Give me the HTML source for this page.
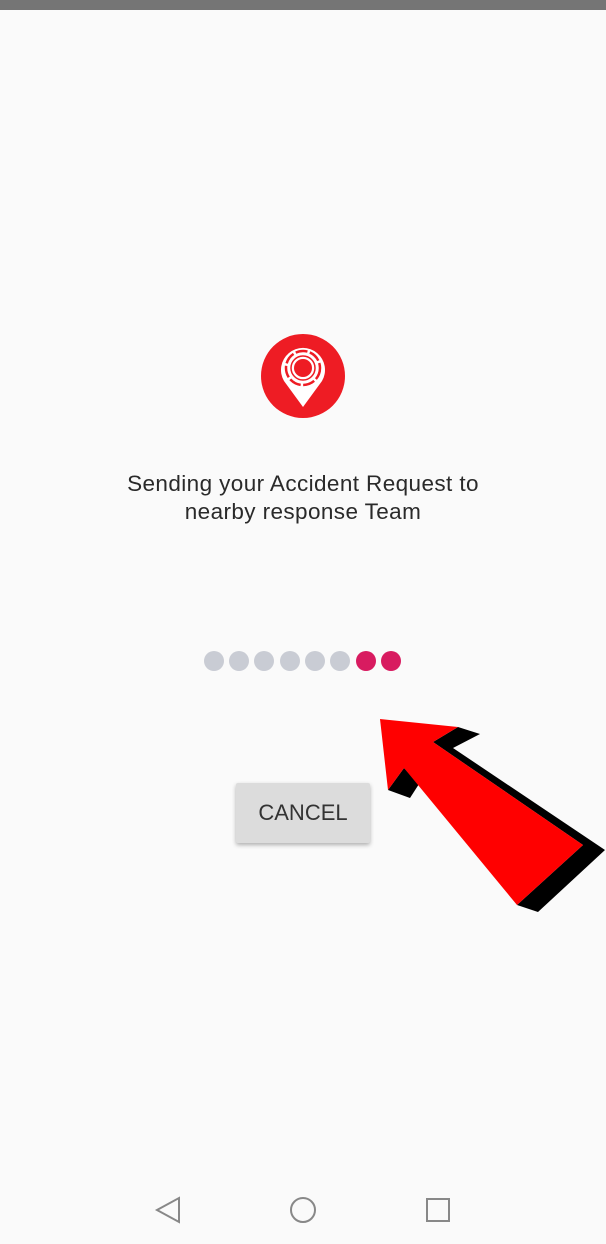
<!DOCTYPE html>
<html><head><style>
body{margin:0;width:606px;height:1244px;background:#fafafa;position:relative;overflow:hidden;font-family:"Liberation Sans",sans-serif}
.top{position:absolute;left:0;top:0;width:606px;height:10px;background:#757575}
.t{position:absolute;left:0;width:606px;text-align:center;font-size:22.5px;letter-spacing:0.4px;color:#2a2a2a;top:470px;line-height:28px}
.btn{position:absolute;left:236px;top:783px;width:134px;height:60px;background:#dcdcdc;box-shadow:0 2px 4px rgba(0,0,0,.3);border-radius:2px;text-align:center;line-height:60px;font-size:22px;color:#333}
.d{position:absolute;top:651px;width:20px;height:20px;border-radius:50%;background:#c9ccd4}
</style></head><body>
<div class="top"></div>
<svg style="position:absolute;left:0;top:0" width="606" height="1244">
<circle cx="303" cy="376" r="42" fill="#ee1c24"/>
<path d="M284 381 A22 22 0 1 1 322 381 L303 407 Z" fill="#fff"/>
<circle cx="303" cy="368" r="17" fill="none" stroke="#ee1c24" stroke-width="2.5" stroke-dasharray="12 2.5"/>
<circle cx="303" cy="368" r="12" fill="none" stroke="#ee1c24" stroke-width="1.5"/>
<circle cx="303" cy="368" r="9" fill="#ee1c24"/>
<polygon points="458,727 480,734 453,748 605,850 538,912 517,905 583,845 433,742" fill="#000"/>
<polygon points="388,790 410,798 419,784 404,768" fill="#000"/>
<polygon points="380,719 458,727 433,742 583,845 517,905 404,768 388,790" fill="#ff0000"/>
<path d="M157 1210 L179 1198 L179 1222 Z" fill="none" stroke="#888" stroke-width="2"/>
<circle cx="303" cy="1210" r="12" fill="none" stroke="#888" stroke-width="2"/>
<rect x="427" y="1199" width="22" height="22" fill="none" stroke="#888" stroke-width="2"/>
</svg>
<div class="t">Sending your Accident Request to<br>nearby response Team</div>
<div class="d" style="left:204px"></div><div class="d" style="left:229px"></div><div class="d" style="left:254px"></div><div class="d" style="left:280px"></div><div class="d" style="left:305px"></div><div class="d" style="left:330px"></div><div class="d" style="left:356px;background:#d81b60"></div><div class="d" style="left:381px;background:#d81b60"></div>
<div class="btn">CANCEL</div>
</body></html>
